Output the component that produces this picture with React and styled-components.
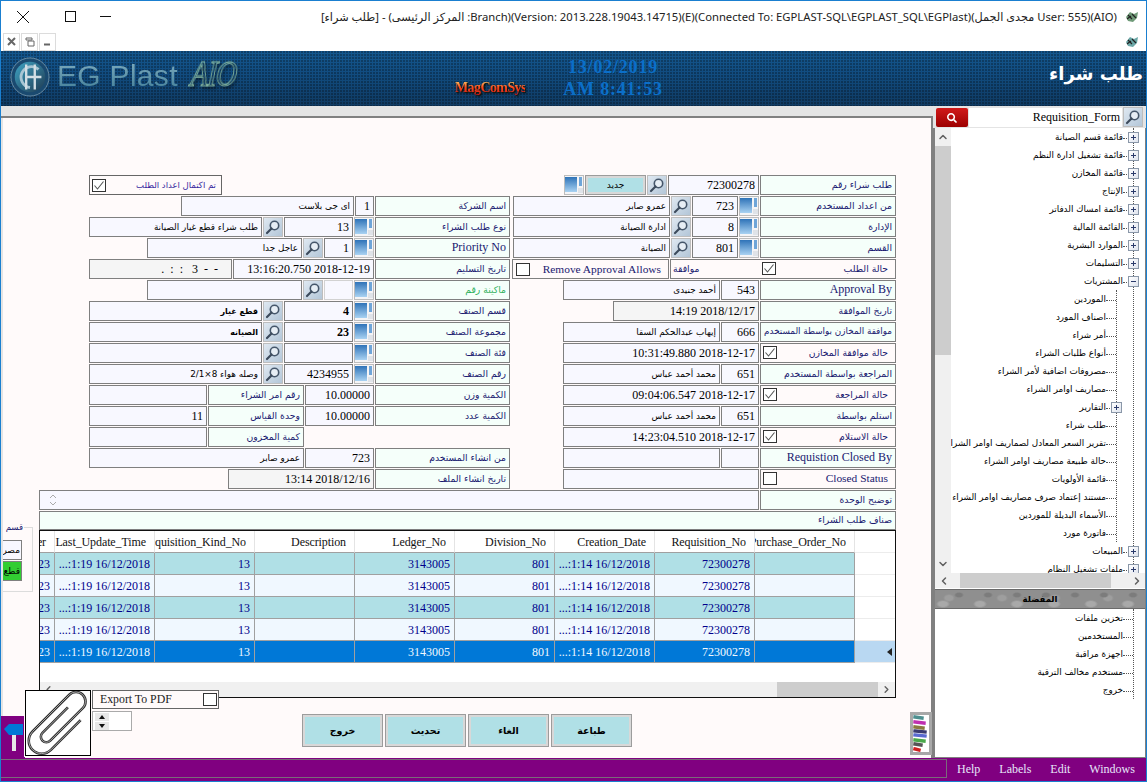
import React from 'react';
import styled, { createGlobalStyle } from 'styled-components';
import { FaSearch } from 'react-icons/fa';
import { ChevronUp, ChevronDown, ChevronLeft, ChevronRight } from 'lucide-react';

const serif = `"Liberation Serif", "DejaVu Sans", serif`;
const arabic = `"DejaVu Sans", "Liberation Sans", sans-serif`;
const ui = `"Noto Sans", "DejaVu Sans", sans-serif`;

const GlobalStyle = createGlobalStyle`
  html, body { margin: 0; padding: 0; background: #fff; }
  * { box-sizing: border-box; }
`;

const Window = styled.div`
  position: relative;
  width: 1147px;
  height: 782px;
  border: 1px solid #1a7fd0;
  display: flex;
  flex-direction: column;
  overflow: hidden;
  background: #fff;
`;

const TitleBar = styled.div`
  height: 31px;
  flex-shrink: 0;
  display: flex;
  align-items: center;
  background: #fff;
`;

const WinControls = styled.div`
  display: flex;
  align-items: center;
  gap: 24px;
  padding-left: 15px;
  color: #111;
  & > svg:first-child {
    margin-right: 11px;
  }
`;

const TitleText = styled.div`
  margin-left: auto;
  font: 11.25px ${ui};
  color: #222;
  white-space: nowrap;
`;

const TitleIcon = styled.div`
  width: 29px;
  display: flex;
  justify-content: center;
`;

const MdiBar = styled.div`
  height: 19px;
  flex-shrink: 0;
  display: flex;
  align-items: center;
  padding-left: 2px;
  gap: 1px;
  background: #fff;
`;

const MdiButton = styled.div`
  width: 17px;
  height: 18px;
  border: 1px solid #dcdcdc;
  display: flex;
  align-items: center;
  justify-content: center;
`;

const MdiRight = styled.div`
  margin-left: auto;
  width: 29px;
  display: flex;
  justify-content: center;
`;

const Banner = styled.div`
  height: 55px;
  flex-shrink: 0;
  display: flex;
  align-items: flex-start;
  background:
    radial-gradient(circle at 1px 1px, rgba(0, 0, 0, 0.28) 0.7px, transparent 1px) 0 0 / 3px 3px,
    linear-gradient(180deg, #14578f 0%, #114b7e 45%, #0f3a62 100%);
`;

const LogoMark = styled.div`
  margin: 6px 0 0 9px;
  width: 40px;
  height: 40px;
`;

const LogoText = styled.div`
  margin: 8px 0 0 7px;
  width: 128px;
  font: 30px "Liberation Sans", sans-serif;
  letter-spacing: 0.3px;
  white-space: nowrap;
  background: linear-gradient(180deg, #82aebf 0%, #3f7d97 100%);
  -webkit-background-clip: text;
  background-clip: text;
  color: transparent;
`;

const LogoScribble = styled.div`
  margin: 6px 0 0 6px;
  width: 50px;
  font: italic 29px "Liberation Serif", serif;
  letter-spacing: -1px;
  color: transparent;
  -webkit-text-stroke: 0.8px #86b8a0;
  transform: scaleY(1.25) skewX(-6deg);
  filter: drop-shadow(2px 2px 1px rgba(0, 0, 0, 0.6));
`;

const MagLogo = styled.div`
  margin: 29px 0 0 214px;
  width: 70px;
  font: bold 14px "Liberation Serif", serif;
  letter-spacing: -0.6px;
  white-space: nowrap;
  background: linear-gradient(180deg, #ffe070 0%, #ff4a1c 45%, #c81212 100%);
  -webkit-background-clip: text;
  background-clip: text;
  color: transparent;
  filter: drop-shadow(1px 1px 0 rgba(20, 20, 0, 0.8)) drop-shadow(1px 1px 1px rgba(0, 0, 0, 0.5));
`;

const Clock = styled.div`
  margin: 5px 0 0 36px;
  width: 104px;
  text-align: center;
  font: bold 18px/22px "Liberation Serif", serif;
  letter-spacing: 0.8px;
  color: #0b6fc9;
`;

const BannerTitle = styled.div`
  margin: 12px 3px 0 auto;
  font: bold 18px ${arabic};
  color: #fff;
  white-space: nowrap;
`;

const Workspace = styled.div`
  flex: 1;
  min-height: 0;
  display: flex;
`;

const MainColumn = styled.div`
  width: 932px;
  flex-shrink: 0;
  display: flex;
  flex-direction: column;
  background: #e4e4e4;
`;

const GrayStrip = styled.div`
  height: 12px;
  flex-shrink: 0;
  border-bottom: 2px solid #808080;
`;

const FormArea = styled.div`
  position: relative;
  flex: 1;
  min-height: 0;
  margin-left: 2px;
  padding-top: 57px;
  background: #fffafa;
  border-right: 2px solid #808080;
  display: flex;
  flex-direction: column;
`;

const Rows = styled.div`
  padding-left: 86px;
  display: flex;
  flex-direction: column;
  gap: 1px;
`;

const Row = styled.div`
  display: flex;
  gap: 1px;
`;

const LeftHalf = styled.div`
  width: 421px;
  display: flex;
  gap: 1px;
  justify-content: ${(p) => (p.$start ? 'flex-start' : 'flex-end')};
`;

const RightHalf = styled.div`
  width: 385px;
  display: flex;
  gap: 1px;
  justify-content: flex-end;
`;

const WideRow = styled.div`
  margin-left: -50px;
  width: 857px;
  display: flex;
  gap: 1px;
`;

const Cell = styled.div`
  width: ${(p) => p.$w}px;
  height: 20px;
  flex-shrink: 0;
  border: 1px solid #7f7f7f;
  background: ${(p) => (p.$gray ? '#f5f5f5' : '#f8f8ff')};
  color: #000;
  display: flex;
  align-items: center;
  justify-content: flex-end;
  padding: 0 3px;
  font: ${(p) => (p.$bold ? 'bold ' : '')}${(p) => (p.$ar ? `${p.$bold ? 8 : 8.8}px ${arabic}` : `12px ${serif}`)};
  white-space: nowrap;
  overflow: hidden;
`;

const BlankCell = styled(Cell)`
  border-color: #d2d2d2;
`;

const MaskCell = styled(Cell)`
  white-space: pre;
  padding-right: 13px;
`;

const Label = styled(Cell)`
  background: #f5fffa;
  color: ${(p) => (p.$green ? '#2eaf5a' : '#191970')};
  font: ${(p) => (p.$latin ? `${p.$latin}px ${serif}` : `${p.$size || 9.25}px ${arabic}`)};
  padding-bottom: 2px;
`;

const CheckLabel = styled(Label)`
  background: #fffafa;
  justify-content: space-between;
  padding: 0 7px 2px 2px;
`;

const Box = styled.div`
  width: 14px;
  height: 13px;
  flex-shrink: 0;
  border: 1px solid #333;
  background: #fff;
  display: flex;
  align-items: center;
  justify-content: center;
`;

const IconCell = styled.div`
  width: 20px;
  height: 20px;
  flex-shrink: 0;
  border: 1px solid #bdbdbd;
  background: ${(p) => (p.$mag ? 'linear-gradient(135deg, #dfe8f1, #b3c6d8)' : '#f4f4f6')};
  display: flex;
  align-items: center;
  justify-content: center;
`;

const TealButton = styled.div`
  width: ${(p) => p.$w}px;
  height: ${(p) => p.$h}px;
  flex-shrink: 0;
  border: 1px solid #9c9c9c;
  background: #b0e0e6;
  box-shadow: inset 0 0 0 2px #d8d8d8;
  display: flex;
  align-items: center;
  justify-content: center;
  font: ${(p) => (p.$bare ? `9px` : `bold 9.5px`)} ${arabic};
  color: #000;
`;

const CompleteBox = styled(CheckLabel)`
  padding: 0 5px 0 2px;
  border-color: #666;
  color: #3a2aa0;
  font-size: 8.5px;
`;

const RemoveBox = styled(CheckLabel)`
  padding: 0 7px 0 3px;
  color: #191970;
  font: 11.4px ${serif};
`;

const StatusBox = styled(CheckLabel)`
  padding: 0 7px 2px 2px;
  justify-content: flex-start;
`;

const StatusText = styled.span`
  width: 89px;
  flex-shrink: 0;
`;

const StatusName = styled.span`
  flex: 1;
  text-align: right;
`;

const DescCell = styled(Cell)`
  justify-content: flex-start;
  padding-left: 9px;
`;

const DetailsRow = styled.div`
  display: flex;
  margin-top: 1px;
`;

const GroupStub = styled.div`
  width: 36px;
  flex-shrink: 0;
  padding: 16px 6px 0 0;
`;

const GroupFrame = styled.div`
  position: relative;
  height: 65px;
  border: 1px solid #dcdcdc;
  border-left: 0;
  padding: 12px 10px 0 0;
  display: flex;
  flex-direction: column;
  gap: 1px;
`;

const GroupLegend = styled.span`
  position: absolute;
  top: -6px;
  right: 8px;
  width: 21px;
  display: block;
  direction: rtl;
  text-align: right;
  background: #fffafa;
  padding: 0 1px;
  font: 8.5px ${arabic};
  color: #191970;
  white-space: nowrap;
  overflow: hidden;
`;

const StubCell = styled.div`
  height: 20px;
  border: 1px solid #7f7f7f;
  border-left: 0;
  background: ${(p) => (p.$green ? '#32cd32' : '#f8f8ff')};
  overflow: hidden;
  display: flex;
  align-items: center;
  justify-content: flex-end;
  padding-right: 1px;
  font: 9px ${arabic};
  color: #000;
  white-space: nowrap;
`;

const DetailsColumn = styled.div`
  width: 857px;
  display: flex;
  flex-direction: column;
`;

const DetailsHead = styled(Label)`
  width: 857px;
  height: 19px;
`;

const GridPanel = styled.div`
  height: 168px;
  border: 1px solid #111;
  background: #fff;
  display: flex;
  flex-direction: column;
`;

const GridRow = styled.div`
  height: 22px;
  flex-shrink: 0;
  display: flex;
`;

const GridCell = styled.div`
  width: ${(p) => p.$w}px;
  flex-shrink: 0;
  display: flex;
  align-items: center;
  justify-content: flex-end;
  overflow: hidden;
  white-space: nowrap;
  font: 12px ${serif};
  padding: 2px 4px 0 0;
  background: ${(p) => (p.$sel ? '#0078d7' : p.$alt ? '#f0f8ff' : '#b0e0e6')};
  color: ${(p) => (p.$sel ? '#f0f8ff' : '#00008b')};
  border-right: 1px solid #a0a0a0;
  border-bottom: 1px solid #a0a0a0;
`;

const HeadCell = styled(GridCell)`
  background: #fff;
  color: #111;
  padding-right: 8px;
  border-right-color: #e4e4e4;
  letter-spacing: -0.1px;
`;

const RowHeader = styled.div`
  width: 40px;
  flex-shrink: 0;
  background: ${(p) => (p.$sel ? '#b9d8f2' : '#fff')};
  border-bottom: 1px solid #ececec;
  display: flex;
  align-items: center;
  justify-content: flex-end;
  padding-right: 3px;
`;

const RowPointer = styled.span`
  width: 0;
  height: 0;
  border-top: 4px solid transparent;
  border-bottom: 4px solid transparent;
  border-right: 5px solid #222;
`;

const GridSpacer = styled.div`
  flex: 1;
`;

const HScroll = styled.div`
  height: 15px;
  flex-shrink: 0;
  display: flex;
  align-items: center;
  background: #f0f0f0;
  color: #606060;
`;

const ScrollThumb = styled.div`
  width: ${(p) => p.$w}px;
  height: 15px;
  margin-left: ${(p) => p.$at}px;
  background: #cdcdcd;
`;

const ScrollEnd = styled.div`
  margin-left: auto;
  width: 17px;
  display: flex;
  justify-content: center;
`;

const ScrollStart = styled.div`
  width: 17px;
  display: flex;
  justify-content: center;
`;

const ButtonBar = styled.div`
  display: flex;
  align-items: flex-start;
  gap: 2px;
  padding-left: 299px;
  margin-top: 16px;
`;

const Swatch = styled.div`
  margin: -2px -1px 0 auto;
  width: 22px;
  height: 43px;
  border: 3px solid #a8a8a8;
  background: #fff;
`;

const CornerSign = styled.div`
  position: absolute;
  left: -2px;
  bottom: 0;
  width: 24px;
  height: 42px;
  background: #800080;
`;

const AttachPanel = styled.div`
  position: absolute;
  left: 21px;
  bottom: 1px;
  display: flex;
  gap: 1px;
  background: #fffafa;
  padding: 0 0 1px 1px;
`;

const ClipBox = styled.div`
  width: 66px;
  height: 66px;
  border: 1px solid #000;
  background: #fff;
`;

const AttachSide = styled.div`
  display: flex;
  flex-direction: column;
  gap: 2px;
`;

const ExportBox = styled.div`
  width: 127px;
  height: 19px;
  border: 1px solid #666;
  display: flex;
  align-items: center;
  justify-content: space-between;
  padding: 0 1px 1px 7px;
  background: #fffafa;
  font: 11.8px ${serif};
  color: #222;
`;

const SpinBox = styled.div`
  width: 40px;
  height: 20px;
  border: 1px solid #aaa;
  background: #fff;
  padding: 1px 0 0 2px;
`;

const SpinButton = styled.div`
  width: 14px;
  height: 8px;
  background: #e8e8e8;
  display: flex;
  align-items: center;
  justify-content: center;
  margin-bottom: 1px;
`;

const Tri = styled.span`
  width: 0;
  height: 0;
  border-left: 3px solid transparent;
  border-right: 3px solid transparent;
  ${(p) => (p.$down ? 'border-top: 4px solid #111;' : 'border-bottom: 4px solid #111;')}
`;

const Sidebar = styled.div`
  width: 213px;
  flex-shrink: 0;
  display: flex;
  flex-direction: column;
  background: #e4e4e4;
`;

const SearchRow = styled.div`
  height: 22px;
  flex-shrink: 0;
  display: flex;
  align-items: flex-end;
  padding: 0 3px 1px 3px;
  gap: 1px;
`;

const RedButton = styled.div`
  width: 32px;
  height: 19px;
  border-radius: 2px;
  background: linear-gradient(180deg, #d11a1a, #9c0000);
  display: flex;
  align-items: center;
  justify-content: center;
  color: #fff;
  font-size: 10px;
`;

const SearchInput = styled.div`
  width: 153px;
  height: 19px;
  background: #fff;
  display: flex;
  align-items: center;
  justify-content: flex-end;
  padding-right: 2px;
  font: 12px ${serif};
  color: #000;
`;

const TreeFrame = styled.div`
  flex: 1;
  min-height: 0;
  display: flex;
  flex-direction: column;
  border-left: 2px solid #808080;
  border-right: 1px solid #808080;
  border-bottom: 1px solid #808080;
  background: #fff;
`;

const TreeBody = styled.div`
  height: 445px;
  flex-shrink: 0;
  display: flex;
`;

const VScroll = styled.div`
  width: 16px;
  flex-shrink: 0;
  display: flex;
  flex-direction: column;
  align-items: center;
  background: #f0f0f0;
  color: #606060;
`;

const VEnd = styled.div`
  height: 18px;
  flex-shrink: 0;
  display: flex;
  align-items: center;
  justify-content: center;
`;

const VThumb = styled.div`
  width: 16px;
  height: 209px;
  flex-shrink: 0;
  background: #cdcdcd;
`;

const VTrack = styled.div`
  flex: 1;
`;

const TreeViewport = styled.div`
  flex: 1;
  min-width: 0;
  overflow: hidden;
  padding-right: 11px;
`;

const Branch = styled.div`
  margin-right: ${(p) => p.$inset || 0}px;
  border-right: 1px dotted #555;
`;

const Node = styled.div`
  position: relative;
  height: 18px;
  display: flex;
  align-items: center;
  justify-content: flex-end;
  font: 8.8px ${arabic};
  color: #000;
  white-space: nowrap;
`;

const NodeText = styled.span`
  flex-shrink: 0;
`;

const Dots = styled.span`
  width: 10px;
  flex-shrink: 0;
  border-top: 1px dotted #555;
  margin-top: 2px;
`;

const Expander = styled.span`
  position: absolute;
  right: -6px;
  top: 4px;
  width: 11px;
  height: 11px;
  border: 1px solid #8a97a8;
  background: linear-gradient(135deg, #fff, #dfe4ee);
  &::before {
    content: '';
    position: absolute;
    left: 2px;
    top: 4px;
    width: 5px;
    height: 1px;
    background: #2a3a6a;
  }
  ${(p) =>
    p.$open
      ? ''
      : `&::after {
    content: '';
    position: absolute;
    left: 4px;
    top: 2px;
    width: 1px;
    height: 5px;
    background: #2a3a6a;
  }`}
`;

const FavHeader = styled.div`
  height: 20px;
  flex-shrink: 0;
  margin-top: 1px;
  border-top: 1px solid #6a6a6a;
  border-bottom: 1px solid #6a6a6a;
  background:
    radial-gradient(ellipse 7px 4px at 8px 14px, #a9a9a9 0 60%, transparent 100%) 0 0 / 37px 19px,
    radial-gradient(ellipse 5px 3px at 24px 5px, #7c7c7c 0 60%, transparent 100%) 0 0 / 29px 19px,
    radial-gradient(ellipse 6px 4px at 14px 8px, #9e9e9e 0 60%, transparent 100%) 0 0 / 53px 19px,
    #8f8f8f;
  display: flex;
  align-items: center;
  justify-content: center;
  font: bold 8.5px ${arabic};
  color: #000;
`;

const FavBody = styled.div`
  flex: 1;
  padding: 0 11px 0 0;
`;

const StatusBar = styled.div`
  height: 23px;
  flex-shrink: 0;
  display: flex;
  background: #800080;
`;

const StatusWell = styled.div`
  flex: 1;
  margin: 1px 0 3px;
  border-top: 1px solid #7a6a7a;
  border-bottom: 1px solid #7a6a7a;
  border-right: 1px solid #7a6a7a;
`;

const MenuList = styled.div`
  width: 199px;
  flex-shrink: 0;
  display: flex;
  align-items: center;
  gap: 19px;
  padding: 0 0 1px 10px;
  font: 12px ${serif};
  color: #e6e6fa;
`;

const Close = () => (
  <svg width="14" height="14" viewBox="0 0 14 14">
    <path d="M1 1 L13 13 M13 1 L1 13" stroke="#111" strokeWidth="1" />
  </svg>
);

const Maximize = () => (
  <svg width="11" height="11" viewBox="0 0 11 11">
    <rect x="0.5" y="0.5" width="10" height="10" fill="none" stroke="#111" />
  </svg>
);

const Minimize = () => (
  <svg width="11" height="11" viewBox="0 0 11 11">
    <path d="M0 5.5 H11" stroke="#111" />
  </svg>
);

const AppGlyph = ({ tone }) => (
  <svg width="16" height="14" viewBox="0 0 16 14">
    <path d="M2 7 L6 2 L10 4 L14 2 L13 8 L9 12 L4 11 Z" fill={tone} />
    <path d="M4 5 L8 9 M8 4 L12 8 M3 9 L7 6" stroke="#222" strokeWidth="1.2" />
  </svg>
);

const LookupGlyph = () => (
  <svg width="16" height="16" viewBox="0 0 16 16">
    <circle cx="9.5" cy="6.5" r="4.2" fill="#e7eef5" stroke="#45566a" strokeWidth="1.6" />
    <path d="M6.5 9.5 L2 14" stroke="#3c4a5c" strokeWidth="2.2" strokeLinecap="round" />
  </svg>
);

const PickerGlyph = () => (
  <svg width="18" height="18" viewBox="0 0 18 18">
    <defs>
      <linearGradient id="pick" x1="0" y1="0" x2="0" y2="1">
        <stop offset="0" stopColor="#2f73b8" />
        <stop offset="1" stopColor="#a9d2f2" />
      </linearGradient>
    </defs>
    <rect x="0" y="1" width="12" height="15" fill="url(#pick)" />
    <rect x="14" y="1" width="3" height="9" fill="#6fa5d8" />
    <rect x="13" y="12" width="5" height="5" fill="#dfe3e8" />
  </svg>
);

const Tick = () => (
  <svg width="12" height="11" viewBox="0 0 12 11">
    <path d="M1.5 5.5 L4.5 9 L10.5 1.5" fill="none" stroke="#555" strokeWidth="1.1" />
  </svg>
);

const Check = ({ on }) => <Box>{on && <Tick />}</Box>;

const Find = () => (
  <IconCell $mag>
    <LookupGlyph />
  </IconCell>
);

const Pick = () => (
  <IconCell>
    <PickerGlyph />
  </IconCell>
);

const LookupLeft = ({ label, num, name, bold }) => (
  <LeftHalf>
    <Cell $w={173} $ar $bold={bold}>{name}</Cell>
    <Find />
    <Cell $w={69} $bold={bold}>{num}</Cell>
    <Pick />
    <Label $w={135}>{label}</Label>
  </LeftHalf>
);

const LookupRight = ({ label, num, name }) => (
  <RightHalf>
    <Cell $w={157} $ar>{name}</Cell>
    <Find />
    <Cell $w={46}>{num}</Cell>
    <Pick />
    <Label $w={136}>{label}</Label>
  </RightHalf>
);

const PersonRight = ({ label, latin, size, num, name }) => (
  <RightHalf>
    <Cell $w={157} $ar>{name}</Cell>
    <Cell $w={38}>{num}</Cell>
    <Label $w={136} $latin={latin} $size={size}>{label}</Label>
  </RightHalf>
);

const StampRight = ({ label, latin, value, on }) => (
  <RightHalf>
    <Cell $w={196}>{value}</Cell>
    <CheckLabel $w={136} $latin={latin}>
      <Check on={on} />
      {label}
    </CheckLabel>
  </RightHalf>
);

const columns = [
  { name: 'Last_Update_Time', value: '...:1:19 16/12/2018' },
  { name: 'Requisition_Kind_No', value: '13' },
  { name: 'Description', value: '' },
  { name: 'Ledger_No', value: '3143005' },
  { name: 'Division_No', value: '801' },
  { name: 'Creation_Date', value: '...:1:14 16/12/2018' },
  { name: 'Requisition_No', value: '72300278' },
  { name: 'Purchase_Order_No', value: '' },
];

const treeTop = [
  'قائمة قسم الصيانة',
  'قائمة تشغيل ادارة النظم',
  'قائمة المخازن',
  'الإنتاج',
  'قائمة امساك الدفاتر',
  'القائمة المالية',
  'الموارد البشرية',
  'التسليمات',
];

const purchasing = [
  'الموردين',
  'اصناف المورد',
  'أمر شراء',
  'أنواع طلبات الشراء',
  'مصروفات اضافية لأمر الشراء',
  'مصاريف اوامر الشراء',
  'التقارير',
  'طلب شراء',
  'تقرير السعر المعادل لصماريف اوامر الشراء',
  'حالة طبيعة مصاريف اوامر الشراء',
  'قائمة الأولويات',
  'مستند إعتماد صرف مصاريف اوامر الشراء',
  'الأسماء البديلة للموردين',
  'فاتورة مورد',
];

const favourites = ['تخزين ملفات', 'المستخدمين', 'اجهزة مراقبة', 'مستخدم مخالف الترقية', 'خروج'];

const TreeNode = ({ text, folder, open }) => (
  <Node>
    <NodeText>{text}</NodeText>
    <Dots />
    {folder && <Expander $open={open} />}
  </Node>
);

export default function App() {
  return (
    <>
      <GlobalStyle />
      <Window>
        <TitleBar>
          <WinControls>
            <Close />
            <Maximize />
            <Minimize />
          </WinControls>
          <TitleText>
            [<bdi>طلب شراء</bdi>] - (<bdi>المركز الرئيسى</bdi> :Branch)(Version: 2013.228.19043.14715)(E)(Connected To: EGPLAST-SQL\EGPLAST_SQL\EGPlast)(<bdi>مجدى الجمل</bdi> User: 555)(AIO)
          </TitleText>
          <TitleIcon>
            <AppGlyph tone="#6f9a78" />
          </TitleIcon>
        </TitleBar>

        <MdiBar>
          <MdiButton>
            <svg width="9" height="9" viewBox="0 0 9 9">
              <path d="M1 1 L8 8 M8 1 L1 8" stroke="#666" strokeWidth="2" />
            </svg>
          </MdiButton>
          <MdiButton>
            <svg width="10" height="10" viewBox="0 0 10 10">
              <path d="M1 1 H7 V3 H1 Z M3 4 H9 V9 H3 Z" fill="none" stroke="#666" />
            </svg>
          </MdiButton>
          <MdiButton>
            <svg width="9" height="9" viewBox="0 0 9 9">
              <path d="M1 7.5 H7" stroke="#666" strokeWidth="2" />
            </svg>
          </MdiButton>
          <MdiRight>
            <AppGlyph tone="#6aa6a6" />
          </MdiRight>
        </MdiBar>

        <Banner>
          <LogoMark>
            <svg width="40" height="40" viewBox="0 0 42 42">
              <defs>
                <linearGradient id="ring" x1="0" y1="0" x2="1" y2="1">
                  <stop offset="0" stopColor="#3fa4c4" />
                  <stop offset="1" stopColor="#1f3a52" />
                </linearGradient>
              </defs>
              <circle cx="21" cy="21" r="20" fill="#1a4a70" stroke="#6f8fa5" strokeWidth="1" />
              <circle cx="21" cy="21" r="16" fill="url(#ring)" />
              <path d="M30 13 A11 11 0 1 0 21 32" fill="none" stroke="#a8c6d4" strokeWidth="3" />
              <path d="M17 8 V34 M26 8 V34 M17 21 H33" stroke="#d2dee4" strokeWidth="2.5" fill="none" />
            </svg>
          </LogoMark>
          <LogoText>EG Plast</LogoText>
          <LogoScribble>AIO</LogoScribble>
          <MagLogo>MagComSys</MagLogo>
          <Clock>
            13/02/2019
            <br />
            AM 8:41:53
          </Clock>
          <BannerTitle>طلب شراء</BannerTitle>
        </Banner>

        <Workspace>
          <MainColumn>
            <GrayStrip />
            <FormArea>
              <Rows>
                <Row>
                  <LeftHalf $start>
                    <CompleteBox $w={133}>
                      <Check on />
                      تم اكتمال اعداد الطلب
                    </CompleteBox>
                  </LeftHalf>
                  <RightHalf>
                    <Pick />
                    <TealButton $w={61} $h={20} $bare>جديد</TealButton>
                    <Find />
                    <Cell $w={91}>72300278</Cell>
                    <Label $w={136}>طلب شراء رقم</Label>
                  </RightHalf>
                </Row>

                <Row>
                  <LeftHalf>
                    <Cell $w={173} $ar>اى جى بلاست</Cell>
                    <Cell $w={19}>1</Cell>
                    <Label $w={135}>اسم الشركة</Label>
                  </LeftHalf>
                  <LookupRight label="من اعداد المستخدم" num="723" name="عمرو صابر" />
                </Row>

                <Row>
                  <LookupLeft label="نوع طلب الشراء" num="13" name="طلب شراء قطع غيار الصيانة" />
                  <LookupRight label="الإدارة" num="8" name="ادارة الصيانة" />
                </Row>

                <Row>
                  <LeftHalf>
                    <Cell $w={155} $ar>عاجل جدا</Cell>
                    <Find />
                    <Cell $w={29}>1</Cell>
                    <Pick />
                    <Label $w={135} $latin={12}>Priority No</Label>
                  </LeftHalf>
                  <LookupRight label="القسم" num="801" name="الصيانة" />
                </Row>

                <Row>
                  <LeftHalf>
                    <MaskCell $w={143} $gray>{'.  :  :   3  -  -'}</MaskCell>
                    <Cell $w={141}>13:16:20.750 2018-12-19</Cell>
                    <Label $w={135}>تاريخ التسليم</Label>
                  </LeftHalf>
                  <RightHalf>
                    <RemoveBox $w={157}>
                      <Check />
                      Remove Approval Allows
                    </RemoveBox>
                    <StatusBox $w={226}>
                      <StatusText>موافقة</StatusText>
                      <Check on />
                      <StatusName>حالة الطلب</StatusName>
                    </StatusBox>
                  </RightHalf>
                </Row>

                <Row>
                  <LeftHalf>
                    <Cell $w={155} />
                    <Find />
                    <BlankCell $w={29} />
                    <Pick />
                    <Label $w={135} $green>ماكينة رقم</Label>
                  </LeftHalf>
                  <PersonRight label="Approval By" latin={12} num="543" name="أحمد جنيدى" />
                </Row>

                <Row>
                  <LookupLeft label="قسم الصنف" num="4" name="قطع غيار" bold />
                  <RightHalf>
                    <Cell $w={146} $gray>14:19 2018/12/17</Cell>
                    <Label $w={136}>تاريخ الموافقة</Label>
                  </RightHalf>
                </Row>

                <Row>
                  <LookupLeft label="مجموعة الصنف" num="23" name="الصيانه" bold />
                  <PersonRight label="موافقة المخازن بواسطة المستخدم" size={8.8} num="666" name="إيهاب عبدالحكم السقا" />
                </Row>

                <Row>
                  <LookupLeft label="فئة الصنف" />
                  <StampRight label="حالة موافقة المخازن" value="10:31:49.880 2018-12-17" on />
                </Row>

                <Row>
                  <LookupLeft label="رقم الصنف" num="4234955" name="2/1×8 وصله هواء" />
                  <PersonRight label="المراجعة بواسطة المستخدم" num="651" name="محمد أحمد عباس" />
                </Row>

                <Row>
                  <LeftHalf>
                    <Cell $w={118} />
                    <Label $w={96}>رقم امر الشراء</Label>
                    <Cell $w={69}>10.00000</Cell>
                    <Label $w={135}>الكمية وزن</Label>
                  </LeftHalf>
                  <StampRight label="حالة المراجعة" value="09:04:06.547 2018-12-17" on />
                </Row>

                <Row>
                  <LeftHalf>
                    <Cell $w={118}>11</Cell>
                    <Label $w={96}>وحدة القياس</Label>
                    <Cell $w={69}>10.00000</Cell>
                    <Label $w={135}>الكمية عدد</Label>
                  </LeftHalf>
                  <PersonRight label="استلم بواسطة" num="651" name="محمد أحمد عباس" />
                </Row>

                <Row>
                  <LeftHalf $start>
                    <Cell $w={118} />
                    <Label $w={96}>كمية المخزون</Label>
                  </LeftHalf>
                  <StampRight label="حالة الاستلام" value="14:23:04.510 2018-12-17" on />
                </Row>

                <Row>
                  <LeftHalf>
                    <Cell $w={215} $ar>عمرو صابر</Cell>
                    <Cell $w={69}>723</Cell>
                    <Label $w={135}>من انشاء المستخدم</Label>
                  </LeftHalf>
                  <PersonRight label="Requistion Closed By" latin={12} />
                </Row>

                <Row>
                  <LeftHalf>
                    <Cell $w={146} $gray>13:14 2018/12/16</Cell>
                    <Label $w={135}>تاريخ انشاء الملف</Label>
                  </LeftHalf>
                  <StampRight label="Closed Status" latin={11.4} />
                </Row>

                <WideRow>
                  <DescCell $w={720}>
                    <svg width="8" height="12" viewBox="0 0 8 12">
                      <path d="M1 4 L4 1 L7 4 M1 8 L4 11 L7 8" fill="none" stroke="#aaa" />
                    </svg>
                  </DescCell>
                  <Label $w={136}>توضيح الوحدة</Label>
                </WideRow>
              </Rows>

              <DetailsRow>
                <GroupStub>
                  <GroupFrame>
                    <GroupLegend>قسم الصنف</GroupLegend>
                    <StubCell>مصر</StubCell>
                    <StubCell $green>قطع</StubCell>
                  </GroupFrame>
                </GroupStub>
                <DetailsColumn>
                  <DetailsHead>صناف طلب الشراء</DetailsHead>
                  <GridPanel>
                    <GridRow>
                      <HeadCell $w={15}>er</HeadCell>
                      {columns.map((c) => (
                        <HeadCell key={c.name} $w={100}>{c.name}</HeadCell>
                      ))}
                      <RowHeader />
                    </GridRow>
                    {[0, 1, 2, 3, 4].map((i) => (
                      <GridRow key={i}>
                        <GridCell $w={15} $alt={i % 2 === 1} $sel={i === 4}>23</GridCell>
                        {columns.map((c) => (
                          <GridCell key={c.name} $w={100} $alt={i % 2 === 1} $sel={i === 4}>{c.value}</GridCell>
                        ))}
                        <RowHeader $sel={i === 4}>{i === 4 && <RowPointer />}</RowHeader>
                      </GridRow>
                    ))}
                    <GridSpacer />
                    <HScroll>
                      <ScrollStart>
                        <ChevronLeft size={11} strokeWidth={3} />
                      </ScrollStart>
                      <ScrollThumb $at={720} $w={101} />
                      <ScrollEnd>
                        <ChevronRight size={11} strokeWidth={3} />
                      </ScrollEnd>
                    </HScroll>
                  </GridPanel>
                </DetailsColumn>
              </DetailsRow>

              <ButtonBar>
                <TealButton $w={81} $h={33}>خروج</TealButton>
                <TealButton $w={81} $h={33}>تحديث</TealButton>
                <TealButton $w={81} $h={33}>الغاء</TealButton>
                <TealButton $w={81} $h={33}>طباعة</TealButton>
                <Swatch>
                  <svg width="16" height="37" viewBox="0 0 16 37">
                    <g strokeWidth="3.4" strokeLinecap="square">
                      <path d="M2 2 L9 3" stroke="#4e8f8f" />
                      <path d="M2 7 L11 8" stroke="#c030b0" />
                      <path d="M2 12 L10 13" stroke="#8a7a40" />
                      <path d="M2 16 L12 17" stroke="#3a3a70" />
                      <path d="M2 20 L12 21" stroke="#5a6ad0" />
                      <path d="M2 25 L11 26" stroke="#4aa84a" />
                      <path d="M2 29 L8 30" stroke="#555" />
                      <path d="M2 34 L6 35" stroke="#d02020" />
                    </g>
                  </svg>
                </Swatch>
              </ButtonBar>

              <CornerSign>
                <svg width="24" height="42" viewBox="0 0 24 42">
                  <path d="M3 13 L8 8 H22 V19 H8 Z" fill="#0078d7" />
                  <rect x="11" y="19" width="4" height="16" fill="#e8e8e8" />
                </svg>
              </CornerSign>

              <AttachPanel>
                <ClipBox>
                  <svg width="64" height="64" viewBox="0 0 64 64">
                    <g fill="none" transform="rotate(45 32 32) translate(20 -8)">
                      <path
                        d="M8 22 V58 A5.5 5.5 0 0 0 19 58 V12 A9.5 9.5 0 0 0 0 12 V64 A13 13 0 0 0 26 64 V22"
                        stroke="#2d2d2d"
                        strokeWidth="2.6"
                      />
                      <path
                        d="M8 22 V58 A5.5 5.5 0 0 0 19 58 V12 A9.5 9.5 0 0 0 0 12 V64 A13 13 0 0 0 26 64 V22"
                        stroke="#bdbdbd"
                        strokeWidth="0.8"
                      />
                    </g>
                  </svg>
                </ClipBox>
                <AttachSide>
                  <ExportBox>
                    Export To PDF
                    <Check />
                  </ExportBox>
                  <SpinBox>
                    <SpinButton><Tri /></SpinButton>
                    <SpinButton><Tri $down /></SpinButton>
                  </SpinBox>
                </AttachSide>
              </AttachPanel>
            </FormArea>
          </MainColumn>

          <Sidebar>
            <SearchRow>
              <RedButton>
                <FaSearch />
              </RedButton>
              <SearchInput>Requisition_Form</SearchInput>
              <IconCell $mag>
                <LookupGlyph />
              </IconCell>
            </SearchRow>
            <TreeFrame>
              <TreeBody>
                <VScroll>
                  <VEnd>
                    <ChevronUp size={12} strokeWidth={3} />
                  </VEnd>
                  <VThumb />
                  <VTrack />
                  <VEnd>
                    <ChevronDown size={12} strokeWidth={3} />
                  </VEnd>
                </VScroll>
                <TreeViewport>
                  <Branch>
                    {treeTop.map((t) => (
                      <TreeNode key={t} text={t} folder />
                    ))}
                    <TreeNode text="المشتريات" folder open />
                    <Branch $inset={16}>
                      {purchasing.map((t) => (
                        <TreeNode key={t} text={t} folder={t === 'التقارير'} />
                      ))}
                    </Branch>
                    <TreeNode text="المبيعات" folder />
                    <TreeNode text="ملفات تشغيل النظام" folder />
                  </Branch>
                </TreeViewport>
              </TreeBody>
              <HScroll>
                <ScrollStart>
                  <ChevronLeft size={12} strokeWidth={3} />
                </ScrollStart>
                <ScrollThumb $at={8} $w={151} />
                <ScrollEnd>
                  <ChevronRight size={12} strokeWidth={3} />
                </ScrollEnd>
              </HScroll>
              <FavHeader>المفضلة</FavHeader>
              <FavBody>
                <Branch>
                  {favourites.map((t) => (
                    <TreeNode key={t} text={t} />
                  ))}
                </Branch>
              </FavBody>
            </TreeFrame>
          </Sidebar>
        </Workspace>

        <StatusBar>
          <StatusWell />
          <MenuList>
            <span>Help</span>
            <span>Labels</span>
            <span>Edit</span>
            <span>Windows</span>
          </MenuList>
        </StatusBar>
      </Window>
    </>
  );
}
